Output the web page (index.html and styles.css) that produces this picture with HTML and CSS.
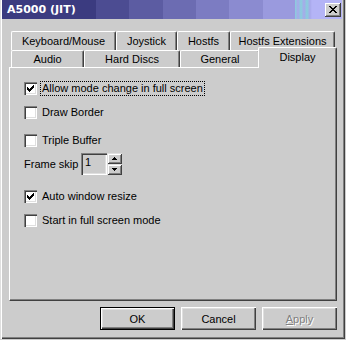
FILE: index.html
```html
<!DOCTYPE html>
<html lang="en">
<head>
  <meta charset="UTF-8">
  <title>A5000 (JIT)</title>
  <link rel="stylesheet" href="styles.css">
</head>
<body>

  <div class="window">
    <div class="titlebar">
      <span class="title">A5000 (JIT)</span>
      <div class="close">
        <svg width="8" height="7" viewBox="0 0 8 7" shape-rendering="crispEdges">
          <path d="M0 0h2v1H0zM1 1h2v1H1zM2 2h4v1H2zM3 3h2v1H3zM2 4h4v1H2zM1 5h2v1H1zM0 6h2v1H0zM6 0h2v1H6zM5 1h2v1H5zM5 5h2v1H5zM6 6h2v1H6z" fill="#000"/>
        </svg>
      </div>
    </div>

    <div class="content">
      <!-- tabs: back row first, front row holds the selected tab -->
      <div class="tab-row back">
        <div class="tab w-kbd">Keyboard/Mouse</div>
        <div class="tab w-joy">Joystick</div>
        <div class="tab w-hostfs">Hostfs</div>
        <div class="tab w-ext">Hostfs Extensions</div>
      </div>
      <div class="tab-row front">
        <div class="tab w-audio">Audio</div>
        <div class="tab w-hd">Hard Discs</div>
        <div class="tab w-gen">General</div>
        <div class="tab w-disp selected">Display</div>
      </div>

      <div class="panel">
        <div class="row r1">
          <span class="checkbox"><svg width="9" height="9" viewBox="0 0 9 9" shape-rendering="crispEdges"><path d="M1 3h1v3H1zM2 4h1v3H2zM3 5h1v3H3zM4 4h1v3H4zM5 3h1v3H5zM6 2h1v3H6zM7 1h1v3H7z" fill="#000"/></svg></span>
          <span class="label focus">Allow mode change in full screen</span>
        </div>
        <div class="row r2">
          <span class="checkbox"></span>
          <span class="label">Draw Border</span>
        </div>
        <div class="row r3">
          <span class="checkbox"></span>
          <span class="label">Triple Buffer</span>
        </div>
        <div class="frame-row">
          <span class="frame-label">Frame skip</span>
          <span class="spin-input">1</span>
          <div class="spin">
            <span class="spin-btn">
              <svg width="5" height="3" viewBox="0 0 5 3" shape-rendering="crispEdges"><path d="M2 0h1v1H2zM1 1h3v1H1zM0 2h5v1H0z" fill="#000"/></svg>
            </span>
            <span class="spin-btn">
              <svg width="5" height="3" viewBox="0 0 5 3" shape-rendering="crispEdges"><path d="M0 0h5v1H0zM1 1h3v1H1zM2 2h1v1H2z" fill="#000"/></svg>
            </span>
          </div>
        </div>
        <div class="row r5">
          <span class="checkbox"><svg width="9" height="9" viewBox="0 0 9 9" shape-rendering="crispEdges"><path d="M1 3h1v3H1zM2 4h1v3H2zM3 5h1v3H3zM4 4h1v3H4zM5 3h1v3H5zM6 2h1v3H6zM7 1h1v3H7z" fill="#000"/></svg></span>
          <span class="label">Auto window resize</span>
        </div>
        <div class="row r6">
          <span class="checkbox"></span>
          <span class="label">Start in full screen mode</span>
        </div>
      </div>

      <div class="buttons">
        <div class="btn default"><span>OK</span></div>
        <div class="btn">Cancel</div>
        <div class="btn disabled"><u>A</u>pply</div>
      </div>
    </div>
  </div>

</body>
</html>
```

FILE: styles.css
```css
body {
  margin: 0;
  background: #cccccc;
  font-family: "Liberation Sans", Arial, sans-serif;
  font-size: 11px;
  color: #000;
}

.window {
  width: 345px;
  height: 339px;
  background: #cccccc;
  box-shadow: inset 1px 0 #dfdfdf, inset 2px 0 #fff, inset -1px -1px #404040, inset -2px -2px #808080;
}

/* title bar */
.titlebar {
  height: 19px;
  margin: 0 3px 0 2px;
  padding: 0 0 0 5px;
  display: flex;
  align-items: center;
  justify-content: space-between;
  background: linear-gradient(to right,
    #3b3b80 0, #3b3b80 94px,
    #4c4c92 94px, #4c4c92 127px,
    #5c5ca2 127px, #5c5ca2 161px,
    #6c6cb2 161px, #6c6cb2 194px,
    #7c7cc2 194px, #7c7cc2 227px,
    #8b8bd0 227px, #8b8bd0 261px,
    #9a9ade 261px, #9a9ade 293px,
    #88d0dc 293px, #a8a8ea 296px, #88d0dc 299px, #a8a8ea 302px, #88d0dc 305px, #a8a8ea 308px,
    #b4b4f6 310px, #b4b4f6 100%);
}

.title {
  font-family: "DejaVu Sans", Verdana, sans-serif;
  font-weight: bold;
  font-size: 11px;
  color: #fff;
}

.close {
  width: 16px;
  height: 14px;
  box-sizing: border-box;
  margin-right: 1px;
  background: #cccccc;
  display: flex;
  align-items: center;
  justify-content: center;
  box-shadow: inset -1px -1px #404040, inset 1px 1px #fff, inset -2px -2px #808080;
}

/* tabs */
.content {
  padding: 12px 0 0 9px;
}

.tab-row {
  display: flex;
  margin-left: 2px;
}

.tab-row.back {
  height: 19px;
}

.tab-row.front {
  height: 17px;
}

.tab {
  box-sizing: border-box;
  display: flex;
  align-items: center;
  justify-content: center;
  background: #cccccc;
  border-top: 1px solid #fff;
  border-left: 1px solid #fff;
  border-right: 1px solid #404040;
  box-shadow: inset -1px 0 #808080;
  border-radius: 2px 2px 0 0;
  white-space: nowrap;
}

.back .tab {
  height: 19px;
}

.front .tab {
  height: 17px;
}

.w-kbd { width: 105px; }
.w-joy { width: 61px; }
.w-hostfs { width: 53px; }
.w-ext { width: 105px; }
.w-audio { width: 73px; }
.w-hd { width: 96px; }
.w-gen { width: 80px; }
.w-disp { width: 75px; }

.front .tab.selected {
  position: relative;
  z-index: 1;
  width: 79px;
  height: 21px;
  margin: -3px -2px 0 -2px;
  padding-bottom: 3px;
}

/* display panel */
.panel {
  box-sizing: border-box;
  width: 328px;
  height: 234px;
  padding: 14px 0 0 14px;
  border-top: 1px solid #fff;
  border-left: 1px solid #fff;
  border-right: 1px solid #404040;
  border-bottom: 1px solid #404040;
  box-shadow: inset -1px -1px #808080;
}

.row {
  display: flex;
  align-items: center;
  height: 13px;
}

.r2 { margin-top: 11px; }
.r3 { margin-top: 15px; }
.r5 { margin-top: 15px; }
.r6 { margin-top: 11px; }

.checkbox {
  box-sizing: border-box;
  width: 13px;
  height: 13px;
  padding: 2px;
  background: #fff;
  box-shadow: inset 1px 1px #808080, inset 2px 2px #404040, inset -1px -1px #fff, inset -2px -2px #dfdfdf;
  display: flex;
  flex-shrink: 0;
}

.label {
  margin-left: 5px;
  white-space: nowrap;
  line-height: 13px;
}

.label.focus {
  outline: 1px dotted #000;
  outline-offset: 0;
  padding: 0 1px;
  margin-left: 4px;
}

.frame-row {
  display: flex;
  align-items: center;
  margin-top: 6px;
  height: 22px;
}

.frame-label {
  width: 57px;
}

.spin-input {
  box-sizing: border-box;
  width: 26px;
  height: 22px;
  padding: 3px 0 0 4px;
  background: #cccccc;
  box-shadow: inset 1px 1px #808080, inset 2px 2px #404040, inset -1px -1px #fff, inset -2px -2px #dfdfdf;
}

.spin {
  display: flex;
  flex-direction: column;
  height: 22px;
}

.spin-btn {
  box-sizing: border-box;
  width: 15px;
  height: 11px;
  display: flex;
  align-items: center;
  justify-content: center;
  background: #cccccc;
  box-shadow: inset 1px 1px #dfdfdf, inset -1px -1px #404040, inset 2px 2px #fff, inset -2px -2px #808080;
}

/* bottom buttons */
.buttons {
  width: 328px;
  margin-top: 6px;
  display: flex;
  justify-content: flex-end;
  gap: 6px;
}

.btn {
  box-sizing: border-box;
  width: 75px;
  height: 23px;
  display: flex;
  align-items: center;
  justify-content: center;
  background: #cccccc;
  box-shadow: inset 1px 1px #fff, inset -1px -1px #404040, inset -2px -2px #808080, inset 2px 2px #dfdfdf;
}

.btn.default {
  border: 1px solid #000;
  box-shadow: inset 1px 1px #fff, inset -1px -1px #404040, inset -2px -2px #808080, inset 2px 2px #dfdfdf;
}

.btn.disabled {
  color: #808080;
  text-shadow: 1px 1px #fff;
}
```
